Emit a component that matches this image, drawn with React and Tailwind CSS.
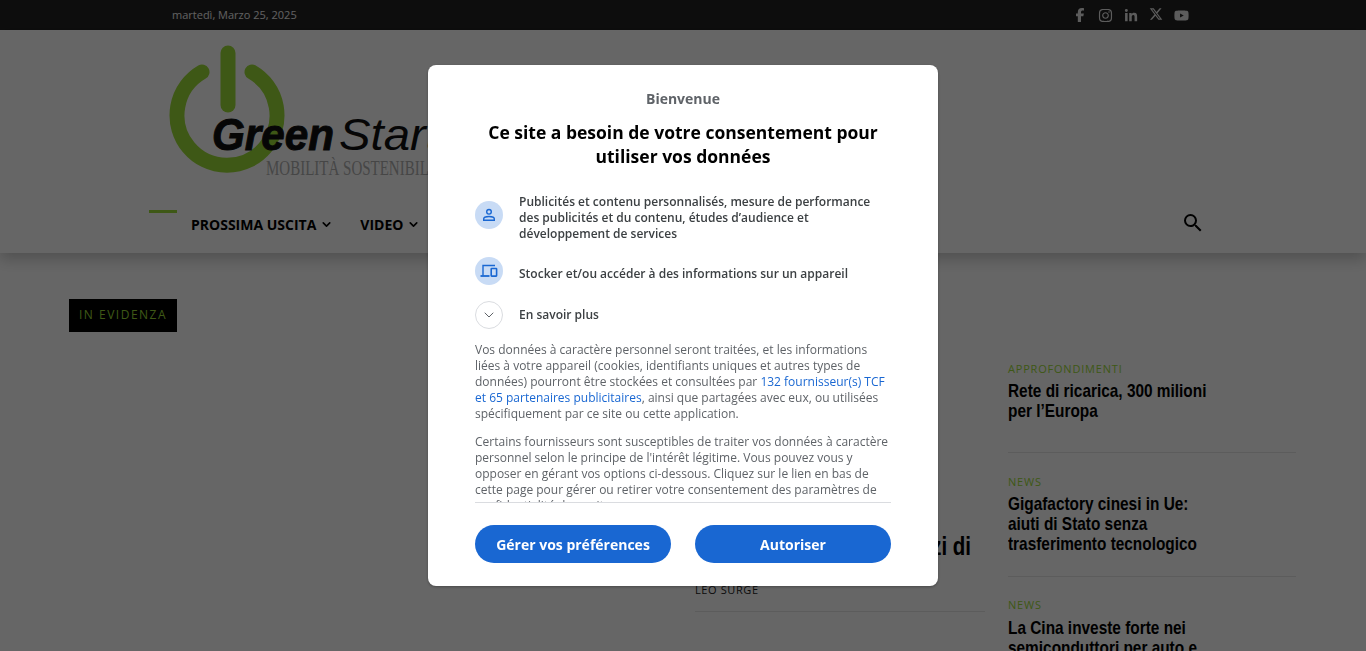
import React from 'react';
import { FaFacebookF, FaInstagram, FaLinkedinIn, FaXTwitter, FaYoutube } from 'react-icons/fa6';
import { MdSearch } from 'react-icons/md';
import { ChevronDown } from 'lucide-react';

const articles = [
  { tag: 'APPROFONDIMENTI', title: ['Rete di ricarica, 300 milioni', "per l’Europa"], pad: 'pb-[31px] pt-0', gap: 'mb-[4px]' },
  { tag: 'NEWS', title: ['Gigafactory cinesi in Ue:', 'aiuti di Stato senza', 'trasferimento tecnologico'], pad: 'pb-[22px] pt-[21px]', gap: 'mb-[4px]' },
  { tag: 'NEWS', title: ['La Cina investe forte nei', 'semiconduttori per auto e'], pad: 'pt-[20px]', gap: 'mb-[5px]' },
];

const Logo = () => (
  <svg width="290" height="140" viewBox="0 0 290 140" className="block">
    <path d="M33 28 A50 50 0 1 0 83 28" fill="none" stroke="#9cdc38" strokeWidth="15" strokeLinecap="round" />
    <line x1="59" y1="9" x2="59" y2="61" stroke="#9cdc38" strokeWidth="15" strokeLinecap="round" />
    <text x="43" y="106" fontFamily="'Liberation Sans', sans-serif" fontSize="45" fontWeight="700" fontStyle="italic" fill="#111" stroke="#111" strokeWidth="1" textLength="122" lengthAdjust="spacingAndGlyphs">Green</text>
    <text x="170" y="106" fontFamily="'Liberation Sans', sans-serif" fontSize="45" fontStyle="italic" fill="#111" textLength="100" lengthAdjust="spacingAndGlyphs">Start</text>
    <text x="97" y="131" fontFamily="'Liberation Serif', serif" fontSize="20" fill="#b0b0b0" textLength="172" lengthAdjust="spacingAndGlyphs">MOBILITÀ SOSTENIBILE</text>
  </svg>
);

const Page = () => (
  <div className="h-[651px] overflow-hidden bg-white font-['Open_Sans',sans-serif]">
    <div className="flex h-[30px] items-center justify-between bg-[#222222] pl-[172px] pr-[177px]">
      <span className="text-[11px] text-[#f0f0f0]">martedì, Marzo 25, 2025</span>
      <div className="flex items-center gap-[11px] text-[14px] text-[#e6e6e6]">
        <FaFacebookF className="h-[14px] w-[14px]" />
        <FaInstagram className="h-[15px] w-[15px]" />
        <FaLinkedinIn className="mt-[2px] h-[14px] w-[14px]" />
        <FaXTwitter className="mt-[-2px] h-[14px] w-[14px]" />
        <FaYoutube className="h-[15px] w-[15px]" />
      </div>
    </div>

    <header className="h-[223px] bg-white shadow-[0_6px_14px_rgba(0,0,0,0.22)]">
      <div className="pl-[169px] pt-[14px]">
        <Logo />
      </div>
      <nav className="flex items-start pl-[149px] pr-[161px]">
        <span className="mt-[26px] h-[3px] w-[28px] bg-[#9cdc38]" />
        <div className="ml-[14px] mt-[30px] flex items-center gap-[27px] text-[14px] font-bold text-black">
          <span className="flex items-center gap-[4px]">PROSSIMA USCITA <ChevronDown size={13} strokeWidth={3} /></span>
          <span className="flex items-center gap-[4px]">VIDEO <ChevronDown size={13} strokeWidth={3} /></span>
        </div>
        <MdSearch className="ml-auto mt-[27px] h-[24px] w-[24px] text-black" />
      </nav>
    </header>

    <main className="flex pl-[69px] pt-[46px]">
      <div className="w-[626px]">
        <span className="inline-block h-[33px] bg-black px-[10px] text-[12px] leading-[31px] tracking-[1.5px] text-[#9cdc38]">IN EVIDENZA</span>
      </div>
      <div className="mt-[232px] w-[290px]">
        <h3 className="flex w-[276px] origin-right scale-x-[0.82] justify-end whitespace-nowrap font-['Liberation_Sans',sans-serif] text-[25px] font-bold leading-[30px] text-black">Nuovi incentivi e prezzi di</h3>
        <p className="mt-[21px] text-[11px] leading-[16px] tracking-[0.6px] text-[#222]">LEO SURGE</p>
        <div className="mt-[13px] border-b border-[#e6e6e6]" />
      </div>
      <div className="ml-[23px] mt-[62px] w-[288px]">
        {articles.map((a) => (
          <article key={a.title[0]} className={`border-b border-[#e6e6e6] last:border-b-0 ${a.pad}`}>
            <p className={`text-[11px] leading-[16px] tracking-[0.8px] text-[#9cdc38] ${a.gap}`}>{a.tag}</p>
            <h3 className="origin-left scale-x-[0.81] whitespace-nowrap font-['Liberation_Sans',sans-serif] text-[19px] font-bold leading-[20px] text-black">
              {a.title.map((l) => <span key={l} className="block">{l}</span>)}
            </h3>
          </article>
        ))}
      </div>
    </main>
  </div>
);

const Consent = () => (
  <div className="fixed inset-0 flex items-start justify-center bg-black/60 pt-[65px]">
    <div className="flex h-[521px] w-[510px] flex-col rounded-[8px] bg-white px-[47px] shadow-[0_1px_3px_rgba(0,0,0,0.3)] font-['Open_Sans',sans-serif]">
      <div className="h-[438px] overflow-hidden border-b border-[#dadce0]">
        <h2 className="mt-[24px] text-center text-[14px] font-bold leading-[20px] text-[#5f6368]">Bienvenue</h2>
        <h1 className="mt-[11px] text-center text-[17.5px] font-bold leading-[24px] text-black">Ce site a besoin de votre consentement pour utiliser vos données</h1>

        <div className="mt-[26px] flex items-center gap-[16px]">
          <span className="mt-[-6px] flex h-[28px] w-[28px] shrink-0 items-center justify-center rounded-full bg-[#c8dbf5]">
            <svg width="16" height="16" viewBox="0 0 16 16" fill="none" stroke="#1967d2" strokeWidth="1.4">
              <circle cx="8" cy="4.8" r="2.3" />
              <path d="M2.7 13.3 V11.8 C2.7 10.2 5.5 9.5 8 9.5 C10.5 9.5 13.3 10.2 13.3 11.8 V13.3 Z" />
            </svg>
          </span>
          <p className="text-[12px] font-semibold leading-[16px] text-[#3c4043]">Publicités et contenu personnalisés, mesure de performance des publicités et du contenu, études d’audience et développement de services</p>
        </div>
        <div className="mt-[15px] flex items-center gap-[16px]">
          <span className="flex h-[28px] w-[28px] shrink-0 items-center justify-center rounded-full bg-[#c8dbf5]">
            <svg width="18" height="16" viewBox="0 0 18 16" fill="none" stroke="#1967d2" strokeWidth="1.4">
              <path d="M15 2.5 H3 V12.5" />
              <path d="M0.5 13 H9.5" strokeWidth="1.8" />
              <rect x="11.2" y="5.5" width="5.4" height="7.6" rx="0.5" strokeWidth="1.6" />
            </svg>
          </span>
          <p className="mt-[6px] text-[12px] font-semibold leading-[16px] text-[#3c4043]">Stocker et/ou accéder à des informations sur un appareil</p>
        </div>
        <div className="mt-[16px] flex items-center gap-[16px]">
          <span className="flex h-[28px] w-[28px] shrink-0 items-center justify-center rounded-full border border-[#dadce0]">
            <ChevronDown size={16} strokeWidth={1.5} className="text-[#5f6368]" />
          </span>
          <p className="text-[12px] font-semibold leading-[16px] text-[#3c4043]">En savoir plus</p>
        </div>

        <p className="mt-[13px] text-[12px] leading-[16px] text-[#5f6368]">
          Vos données à caractère personnel seront traitées, et les informations liées à votre appareil (cookies, identifiants uniques et autres types de données) pourront être stockées et consultées par <span className="text-[#1967d2]">132 fournisseur(s) TCF et 65 partenaires publicitaires</span>, ainsi que partagées avec eux, ou utilisées spécifiquement par ce site ou cette application.
        </p>
        <p className="mt-[12px] text-[12px] leading-[16px] text-[#5f6368]">
          Certains fournisseurs sont susceptibles de traiter vos données à caractère personnel selon le principe de l'intérêt légitime. Vous pouvez vous y opposer en gérant vos options ci-dessous. Cliquez sur le lien en bas de cette page pour gérer ou retirer votre consentement des paramètres de confidentialité de ce site.
        </p>
      </div>
      <div className="mt-[22px] flex gap-[24px]">
        <button className="h-[38px] flex-1 rounded-full bg-[#1967d2] text-[14px] font-bold text-white">Gérer vos préférences</button>
        <button className="h-[38px] flex-1 rounded-full bg-[#1967d2] text-[14px] font-bold text-white">Autoriser</button>
      </div>
    </div>
  </div>
);

export default function App() {
  return (
    <div className="relative">
      <Page />
      <Consent />
    </div>
  );
}
